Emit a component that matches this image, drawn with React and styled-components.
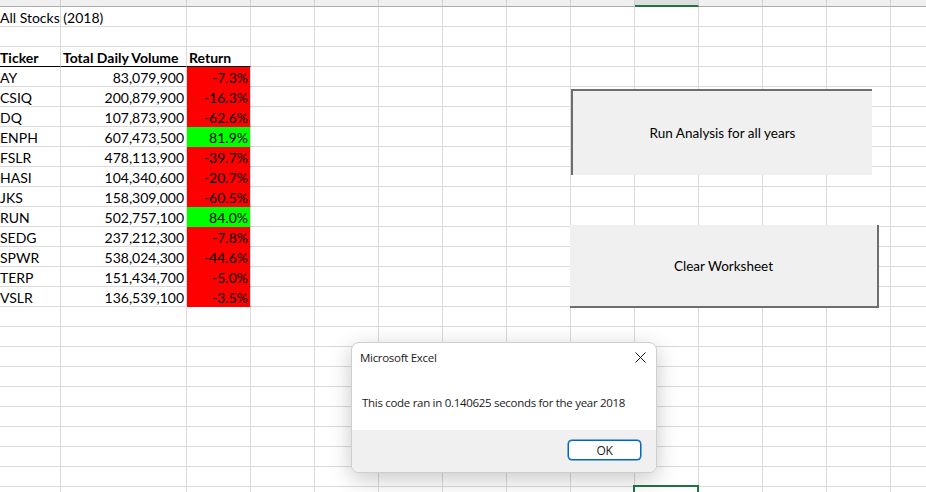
import React from "react";
import styled, { createGlobalStyle } from "styled-components";

const GlobalStyle = createGlobalStyle`
  html, body {
    margin: 0;
    padding: 0;
    background: #ffffff;
    overflow: hidden;
  }
`;

const columns = ["A", "B", "C", "D", "E", "F", "G", "H", "I", "J", "K", "L", "M", "N", "O"];
const widths = [61, 126, 64, 64, 64, 64, 64, 64, 64, 64, 64, 64, 64, 64, 64];
const ROW_COUNT = 25;
const SELECTED_COL = 9;
const SELECTED_ROW = 24;

const stocks = [
  ["AY", "83,079,900", "-7.3%"],
  ["CSIQ", "200,879,900", "-16.3%"],
  ["DQ", "107,873,900", "-62.6%"],
  ["ENPH", "607,473,500", "81.9%"],
  ["FSLR", "478,113,900", "-39.7%"],
  ["HASI", "104,340,600", "-20.7%"],
  ["JKS", "158,309,000", "-60.5%"],
  ["RUN", "502,757,100", "84.0%"],
  ["SEDG", "237,212,300", "-7.8%"],
  ["SPWR", "538,024,300", "-44.6%"],
  ["TERP", "151,434,700", "-5.0%"],
  ["VSLR", "136,539,100", "-3.5%"],
];

const Page = styled.div`
  position: relative;
  width: 926px;
  height: 492px;
  overflow: hidden;
  font-family: Lato, "Liberation Sans", sans-serif;
`;

const Sheet = styled.div`
  display: grid;
  grid-template-columns: ${(p) => p.$cols};
  grid-template-rows: 7px repeat(${ROW_COUNT}, 20px);
`;

// column letters sit above the visible area, only the header strip remains
const HeadCell = styled.div`
  box-sizing: border-box;
  background: ${(p) => (p.$selected ? "#dedede" : "#f0f0f0")};
  border-right: 1px solid #d0d0d0;
  border-bottom: ${(p) => (p.$selected ? "2px solid #217346" : "1px solid #ababab")};
`;

const Cell = styled.div`
  position: relative;
  box-sizing: border-box;
  border-right: 1px solid #dadada;
  border-bottom: 1px solid ${(p) => p.$bottom || p.$fill || "#dadada"};
  background: ${(p) => p.$fill || "transparent"};
  padding: 2px ${(p) => (p.$align === "right" ? "2px" : "0")} 0 ${(p) => (p.$first ? "0" : "2px")};
  font-size: 14px;
  line-height: 18px;
  font-weight: ${(p) => (p.$bold ? 700 : 400)};
  text-align: ${(p) => p.$align || "left"};
  white-space: nowrap;
  color: #000000;

  ${(p) =>
    p.$selected &&
    `
    &::after {
      content: "";
      position: absolute;
      top: -2px;
      left: -2px;
      right: -1px;
      bottom: -1px;
      border: 2px solid #217346;
    }
  `}
`;

const SheetButton = styled.div`
  position: absolute;
  display: flex;
  align-items: center;
  justify-content: center;
  box-sizing: border-box;
  background: #f0f0f0;
  font-size: 13.5px;
  color: #000000;
  left: ${(p) => p.$left}px;
  top: ${(p) => p.$top}px;
  width: ${(p) => p.$width}px;
  height: ${(p) => p.$height}px;
  border-top: ${(p) => (p.$raised ? "none" : "2px solid #6e6e6e")};
  border-left: ${(p) => (p.$raised ? "none" : "2px solid #6e6e6e")};
  border-right: ${(p) => (p.$raised ? "2px solid #6e6e6e" : "none")};
  border-bottom: ${(p) => (p.$raised ? "2px solid #6e6e6e" : "none")};
`;

const Dialog = styled.div`
  position: absolute;
  left: 351px;
  top: 342px;
  width: 306px;
  height: 131px;
  box-sizing: border-box;
  display: flex;
  flex-direction: column;
  background: #ffffff;
  border: 1px solid #cfcfcf;
  border-radius: 8px;
  overflow: hidden;
  box-shadow: 0 6px 22px rgba(0, 0, 0, 0.22);
  font-family: "Open Sans", "Noto Sans", sans-serif;
  font-size: 11.5px;
  letter-spacing: -0.3px;
  color: #1a1a1a;
`;

const TitleBar = styled.div`
  display: flex;
  align-items: center;
  justify-content: space-between;
  height: 29px;
  padding: 0 10px 0 8px;
`;

const CloseIcon = styled.svg`
  width: 11px;
  height: 11px;
`;

const Message = styled.div`
  flex: 1;
  padding: 23px 0 0 10px;
  line-height: 16px;
`;

const Footer = styled.div`
  display: flex;
  justify-content: flex-end;
  height: 42px;
  box-sizing: border-box;
  padding: 10px 15px 0 0;
  background: #f0f0f0;
`;

const OkButton = styled.div`
  display: flex;
  align-items: center;
  justify-content: center;
  width: 73px;
  height: 20px;
  box-sizing: border-box;
  background: #ffffff;
  border: 1px solid #0067c0;
  border-radius: 4px;
  box-shadow: 0 0 0 0.5px #0067c0;
  font-size: 12px;
`;

const rowContent = (r) => {
  if (r === 0) return { 0: { text: "All Stocks (2018)" } };
  if (r === 2)
    return {
      0: { text: "Ticker", bold: true, bottom: "#000000" },
      1: { text: "Total Daily Volume", bold: true, bottom: "#000000" },
      2: { text: "Return", bold: true, bottom: "#000000" },
    };
  const s = stocks[r - 3];
  if (!s) return {};
  const fill = s[2].startsWith("-") ? "#ff0000" : "#00ff00";
  return {
    0: { text: s[0] },
    1: { text: s[1], align: "right" },
    2: { text: s[2], align: "right", fill },
  };
};

export default function App() {
  const rows = Array.from({ length: ROW_COUNT }, (_, r) => r);
  return (
    <Page>
      <GlobalStyle />
      <Sheet $cols={widths.map((w) => `${w}px`).join(" ")}>
        {columns.map((c, i) => (
          <HeadCell key={c} $selected={i === SELECTED_COL} />
        ))}
        {rows.map((r) => {
          const content = rowContent(r);
          return columns.map((c, i) => {
            const cell = content[i] || {};
            return (
              <Cell
                key={`${c}${r}`}
                $first={i === 0}
                $bold={cell.bold}
                $align={cell.align}
                $fill={cell.fill}
                $bottom={cell.bottom}
                $selected={r === SELECTED_ROW && i === SELECTED_COL}
              >
                {cell.text}
              </Cell>
            );
          });
        })}
      </Sheet>

      <SheetButton $left={571} $top={89} $width={301} $height={86}>
        Run Analysis for all years
      </SheetButton>
      <SheetButton $raised $left={570} $top={225} $width={309} $height={83}>
        Clear Worksheet
      </SheetButton>

      <Dialog>
        <TitleBar>
          <span>Microsoft Excel</span>
          <CloseIcon viewBox="0 0 11 11">
            <path d="M0.5 0.5 L10.5 10.5 M10.5 0.5 L0.5 10.5" stroke="#1a1a1a" strokeWidth="1" fill="none" />
          </CloseIcon>
        </TitleBar>
        <Message>This code ran in 0.140625 seconds for the year 2018</Message>
        <Footer>
          <OkButton>OK</OkButton>
        </Footer>
      </Dialog>
    </Page>
  );
}
